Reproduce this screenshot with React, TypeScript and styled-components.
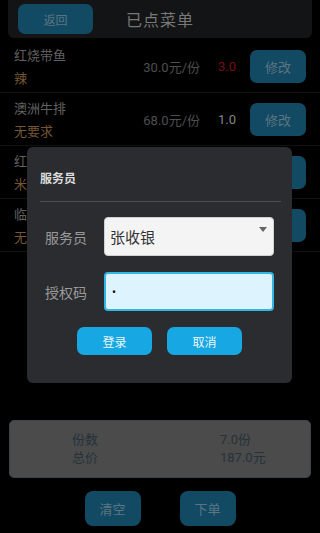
import styled, { createGlobalStyle } from "styled-components";

const GlobalStyle = createGlobalStyle`
  html, body {
    margin: 0;
    padding: 0;
    background: #000;
  }
  body {
    font-family: Roboto, "Noto Sans CJK SC", sans-serif;
  }
`;

const dishes = [
  { name: "红烧带鱼", note: "辣", price: "30.0元/份", qty: "3.0", hot: true },
  { name: "澳洲牛排", note: "无要求", price: "68.0元/份", qty: "1.0", hot: false },
  { name: "红烧带鱼", note: "米饭", price: "2.0元/份", qty: "2.0", hot: false },
  { name: "临时菜", note: "无要求", price: "85.0元/份", qty: "1.0", hot: false },
];

export default function App() {
  return (
    <>
      <GlobalStyle />
      <Screen>
        <Header>
          <BackButton>返回</BackButton>
          <Title>已点菜单</Title>
        </Header>

        <List>
          {dishes.map((d, i) => (
            <Row key={i}>
              <Names>
                <DishName>{d.name}</DishName>
                <Note>{d.note}</Note>
              </Names>
              <Price>{d.price}</Price>
              <Qty $hot={d.hot}>{d.qty}</Qty>
              <EditButton>修改</EditButton>
            </Row>
          ))}
        </List>

        <Summary>
          <SumLine>
            <span>份数</span>
            <span>7.0份</span>
          </SumLine>
          <SumLine>
            <span>总价</span>
            <span>187.0元</span>
          </SumLine>
        </Summary>

        <Actions>
          <ActionButton>清空</ActionButton>
          <ActionButton>下单</ActionButton>
        </Actions>

        <Dialog>
          <DialogTitle>服务员</DialogTitle>
          <Divider />
          <Field>
            <Label>服务员</Label>
            <Spinner>
              张收银
              <Caret />
            </Spinner>
          </Field>
          <Field>
            <Label>授权码</Label>
            <Input>•</Input>
          </Field>
          <DialogButtons>
            <DialogButton>登录</DialogButton>
            <DialogButton>取消</DialogButton>
          </DialogButtons>
        </Dialog>
      </Screen>
    </>
  );
}

const Screen = styled.div`
  position: relative;
  width: 320px;
  height: 533px;
  background: #000;
  overflow: hidden;
  display: flex;
  flex-direction: column;
`;

const Header = styled.div`
  margin: 0 8px;
  height: 38px;
  flex-shrink: 0;
  background: #131415;
  border-radius: 0 0 6px 6px;
  display: flex;
  align-items: center;
  padding: 0 10px;
  box-sizing: border-box;
`;

const BackButton = styled.div`
  width: 75px;
  height: 30px;
  border-radius: 7px;
  background: #134a63;
  color: #5d7482;
  font-size: 12px;
  display: flex;
  align-items: center;
  justify-content: center;
`;

const Title = styled.div`
  margin-left: 33px;
  color: #787878;
  font-size: 16px;
  letter-spacing: 1px;
`;

const List = styled.div`
  flex: 1;
  display: flex;
  flex-direction: column;
  padding: 2px 0 0;
`;

const Row = styled.div`
  height: 52px;
  display: flex;
  align-items: center;
  padding: 0 14px 0 14px;
  border-bottom: 1px solid #121212;
`;

const Names = styled.div`
  flex: 1;
  display: flex;
  flex-direction: column;
  gap: 4px;
`;

const DishName = styled.div`
  color: #626262;
  font-size: 13px;
`;

const Note = styled.div`
  color: #735634;
  font-size: 13px;
`;

const Price = styled.div`
  color: #4f4f4f;
  font-size: 13px;
  margin-right: 18px;
`;

const Qty = styled.div<{ $hot: boolean }>`
  width: 24px;
  color: ${(p) => (p.$hot ? "#761010" : "#868686")};
  font-size: 13px;
  margin-right: 8px;
`;

const EditButton = styled.div`
  width: 56px;
  height: 33px;
  border-radius: 7px;
  background: #134a63;
  color: #5d7482;
  font-size: 13px;
  display: flex;
  align-items: center;
  justify-content: center;
`;

const Summary = styled.div`
  margin: 0 9px;
  height: 58px;
  flex-shrink: 0;
  box-sizing: border-box;
  background: #4b4b4b;
  border: 1px solid #37454d;
  border-radius: 5px;
  display: flex;
  flex-direction: column;
  justify-content: center;
  gap: 2px;
`;

const SumLine = styled.div`
  display: grid;
  grid-template-columns: 150px 1fr;
  color: #25323a;
  font-size: 13px;
  line-height: 16px;

  span:first-child {
    padding-left: 62px;
  }
  span:last-child {
    padding-left: 60px;
  }
`;

const Actions = styled.div`
  display: flex;
  justify-content: center;
  gap: 39px;
  margin: 13px 0 7px;
  flex-shrink: 0;
`;

const ActionButton = styled.div`
  width: 56px;
  height: 35px;
  border-radius: 8px;
  background: #134a63;
  color: #5d7482;
  font-size: 13px;
  display: flex;
  align-items: center;
  justify-content: center;
`;

const Dialog = styled.div`
  position: absolute;
  left: 27px;
  top: 147px;
  width: 265px;
  height: 236px;
  box-sizing: border-box;
  background: #2a2c2f;
  border-radius: 6px;
  padding: 24px 11px 0 13px;
  display: flex;
  flex-direction: column;
`;

const DialogTitle = styled.div`
  color: #dcdcdc;
  font-size: 12px;
  font-weight: bold;
  line-height: 16px;
`;

const Divider = styled.div`
  height: 1px;
  background: #4d4f52;
  margin: 14px 0 15px;
`;

const Field = styled.div`
  display: flex;
  align-items: center;
  margin-bottom: 16px;
`;

const Label = styled.div`
  width: 64px;
  box-sizing: border-box;
  padding-left: 5px;
  color: #9a9a9a;
  font-size: 14px;
`;

const Spinner = styled.div`
  position: relative;
  width: 170px;
  height: 39px;
  box-sizing: border-box;
  border-radius: 4px;
  background: #f4f4f4;
  border: 1px solid #d0d0d0;
  color: #333;
  font-size: 15px;
  padding-left: 5px;
  display: flex;
  align-items: center;
`;

const Caret = styled.div`
  position: absolute;
  right: 6px;
  top: 9px;
  width: 0;
  height: 0;
  border-left: 4px solid transparent;
  border-right: 4px solid transparent;
  border-top: 5px solid #666;
`;

const Input = styled.div`
  width: 170px;
  height: 39px;
  box-sizing: border-box;
  border-radius: 4px;
  background: #ddf4ff;
  border: 2px solid #33b5e5;
  color: #111;
  font-size: 12px;
  padding-left: 6px;
  display: flex;
  align-items: center;
`;

const DialogButtons = styled.div`
  display: flex;
  gap: 15px;
  margin: 0 0 0 37px;
`;

const DialogButton = styled.div`
  width: 75px;
  height: 28px;
  border-radius: 7px;
  background: #17a7e2;
  color: #eaf6fb;
  font-size: 12px;
  display: flex;
  align-items: center;
  justify-content: center;
`;
